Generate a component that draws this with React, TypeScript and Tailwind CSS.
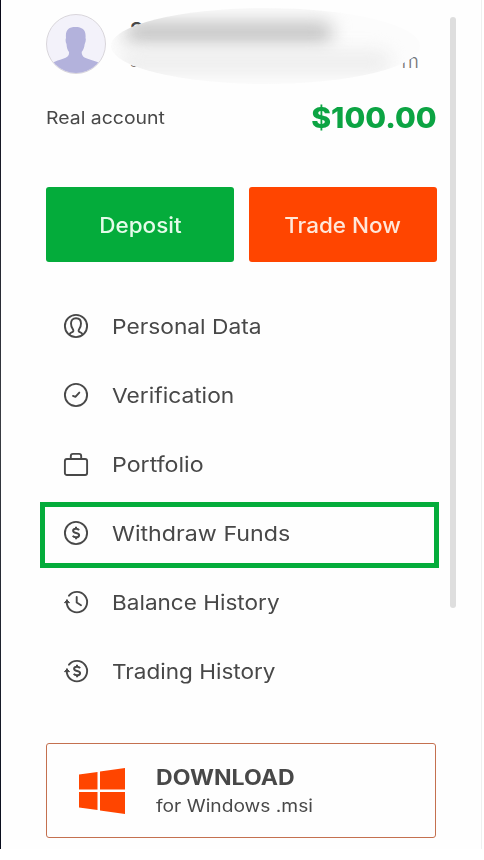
import type { ReactNode } from "react";

interface MenuItem {
  label: string;
  icon: ReactNode;
  stretch: string;
  active?: boolean;
}

function DollarSign() {
  return (
    <path
      d="M15 9.200c-.5-1-1.600-1.500-3-1.500-1.700 0-2.900.8-2.900 2.100 0 3.100 6 1.300 6 4.400 0 1.300-1.300 2.100-3.100 2.100-1.500 0-2.700-.6-3.200-1.600M12 5.700v2M12 16.300v2"
      strokeWidth="2"
      strokeLinecap="butt"
    />
  );
}

function Icon({ children }: { children: ReactNode }) {
  return (
    <svg
      viewBox="0 0 24 24"
      className="h-6 w-6 shrink-0 overflow-visible"
      fill="none"
      stroke="#484848"
      strokeWidth="1.900"
      strokeLinecap="round"
      strokeLinejoin="round"
    >
      {children}
    </svg>
  );
}

function HistoryRing() {
  return (
    <>
      <path d="M5 5.700A10.200 10.200 0 1 1 2.950 14.200c-.3-1.300-.3-2.600 0-4" />
      <path d="M.7 12.400 3 10l2.300 2.400z" fill="#484848" strokeWidth="1" />
    </>
  );
}

const items: MenuItem[] = [
  {
    label: "Personal Data",
    stretch: "scale-x-[1.11]",
    icon: (
      <Icon>
        <circle cx="12" cy="12" r="11.100" />
        <path d="M5.500 20.500c.5-1.600 1.500-1.900 2.800-2.400 1.200-.5 1.400-1.600.6-2.800C7.800 13.700 7 12.100 7 9.500 7 6.300 8.900 4.300 12 4.300s5 2 5 5.200c0 2.600-.8 4.200-1.900 5.800-.8 1.200-.6 2.300.6 2.800 1.300.5 2.300.8 2.800 2.400" />
      </Icon>
    ),
  },
  {
    label: "Verification",
    stretch: "scale-x-[1.11]",
    icon: (
      <Icon>
        <circle cx="12" cy="12" r="11.100" />
        <path d="m9 12.900 2.400 1 3.900-4.300" />
      </Icon>
    ),
  },
  {
    label: "Portfolio",
    stretch: "scale-x-[1.13]",
    icon: (
      <Icon>
        <rect x=".9" y="7" width="22.200" height="16" rx="2" />
        <path d="M6.800 6.500V4.200c0-1.500.8-2.300 2.200-2.300h6c1.400 0 2.200.8 2.200 2.300v2.300" />
      </Icon>
    ),
  },
  {
    label: "Withdraw Funds",
    stretch: "scale-x-[1.133]",
    active: true,
    icon: (
      <Icon>
        <circle cx="12" cy="12" r="11.100" />
        <DollarSign />
      </Icon>
    ),
  },
  {
    label: "Balance History",
    stretch: "scale-x-[1.1]",
    icon: (
      <Icon>
        <HistoryRing />
        <path d="M12.700 7v5.500l4.300 2.700" />
      </Icon>
    ),
  },
  {
    label: "Trading History",
    stretch: "scale-x-[1.1]",
    icon: (
      <Icon>
        <HistoryRing />
        <g transform="translate(1 0)">
          <DollarSign />
        </g>
      </Icon>
    ),
  },
];

function Avatar() {
  return (
    <svg viewBox="0 0 60 60" className="h-[60px] w-[60px] shrink-0">
      <defs>
        <clipPath id="avatar-clip">
          <circle cx="30" cy="30" r="29" />
        </clipPath>
      </defs>
      <circle cx="30" cy="30" r="29.500" fill="#f3f2fa" stroke="#d9d6db" />
      <path
        d="M20 24c-.8-8 2.500-11 9.500-11s10.800 3 10 11c.6 1 .3 4-.8 6-.5 4-1.500 6-3 8 0 4 2 5.500 6 6.800 5 1.800 9 2.700 12 4.200V60H7V48.500c3-1.500 6-2.200 10-3.700 4.500-1.600 6.500-3 6-6.800-1.500-2-2.200-4-2.500-8-1-2-1.200-4.500-.5-6z"
        fill="#b3b2dc"
        clipPath="url(#avatar-clip)"
      />
    </svg>
  );
}

function WindowsLogo() {
  return (
    <svg viewBox="0 0 48 48" className="h-12 w-12 shrink-0" fill="#ff4500">
      <path d="M1 7.500 19.500 5v17.500H1zM22 4.500 47 1v21.500H22zM1 25h18.500v18L1 40.500zM22 25h25v22l-25-3.500z" />
    </svg>
  );
}

export default function App() {
  return (
    <div className="h-[860px] w-[484px] overflow-hidden bg-white font-['Inter',sans-serif] text-[#484848]">
      <aside className="flex h-[849px] w-[482px] border-r border-[#efefef] bg-[#fefefe]">
        <div className="w-px shrink-0 bg-linear-to-b from-[#080818] via-[#3a3d43] to-[#080c1c]" />
        <div className="ml-[45px] w-[391px] shrink-0 pt-[14px]">
          <header className="relative flex h-[60px]">
            <Avatar />
            <div className="ml-6 pt-1">
              <div className="text-xl leading-6 font-semibold">S</div>
              <div className="mt-[9px] flex w-[289px] justify-between text-base leading-5 font-light text-[#777]">
                <span>s</span>
                <span className="text-[20px]">m</span>
              </div>
            </div>
            {/* hides the account holder's name and email */}
            <div className="absolute top-[-6px] left-[65px] h-[76px] w-[309px] overflow-hidden rounded-[50%] bg-[#fcfcfc]">
              <div className="mt-[13px] ml-[14px] h-[24px] w-[208px] rounded-full bg-[#c6c6c6] blur-[9px]" />
              <div className="mt-[4px] ml-[10px] h-[26px] w-[270px] rounded-full bg-[#efefef] blur-[8px]" />
            </div>
          </header>

          <div className="mt-6 flex h-10 items-center justify-between">
            <span className="origin-left scale-x-[1.11] text-[17.500px]">Real account</span>
            <span className="origin-right scale-x-[1.04] text-[29px] font-extrabold text-[#0ca443]">
              $100.00
            </span>
          </div>

          <div className="mt-[49px] flex gap-[15px] text-[21px] font-medium">
            <button className="h-[75px] w-[188px] rounded-[3px] bg-[#04ac3b] pt-[3px] text-[#e4fbe9]">
              <span className="inline-block scale-x-[1.07]">Deposit</span>
            </button>
            <button className="h-[75px] w-[188px] rounded-[3px] bg-[#ff4500] pt-[3px] text-[#ffe7d9]">
              <span className="inline-block scale-x-[1.07]">Trade Now</span>
            </button>
          </div>

          <nav className="mt-[29px] -ml-[6px] w-[399px]">
            {items.map((item) => (
              <a
                key={item.label}
                className={`flex h-[69px] items-center ${item.active ? "relative" : ""}`}
              >
                {item.active && (
                  <span className="absolute inset-x-0 top-1 h-[66px] border-[5px] border-[#04ac3b]" />
                )}
                <span className="ml-6 flex">{item.icon}</span>
                <span className={`ml-6 origin-left pt-1 text-[20.500px] ${item.stretch}`}>
                  {item.label}
                </span>
              </a>
            ))}
          </nav>

          <a className="mt-[38px] flex h-[95px] w-[390px] items-center rounded-[3px] border border-[#c4704f] pl-[31px]">
            <WindowsLogo />
            <div className="ml-[30px] pt-[2px]">
              <div className="origin-left scale-x-[1.1] text-[21px] leading-7 font-bold">DOWNLOAD</div>
              <div className="origin-left scale-x-[1.13] text-[17px] leading-7">for Windows .msi</div>
            </div>
          </a>
        </div>
        <div className="mt-[17px] ml-[13px] h-[591px] w-[6px] rounded-full bg-[#dedede]" />
      </aside>
    </div>
  );
}
